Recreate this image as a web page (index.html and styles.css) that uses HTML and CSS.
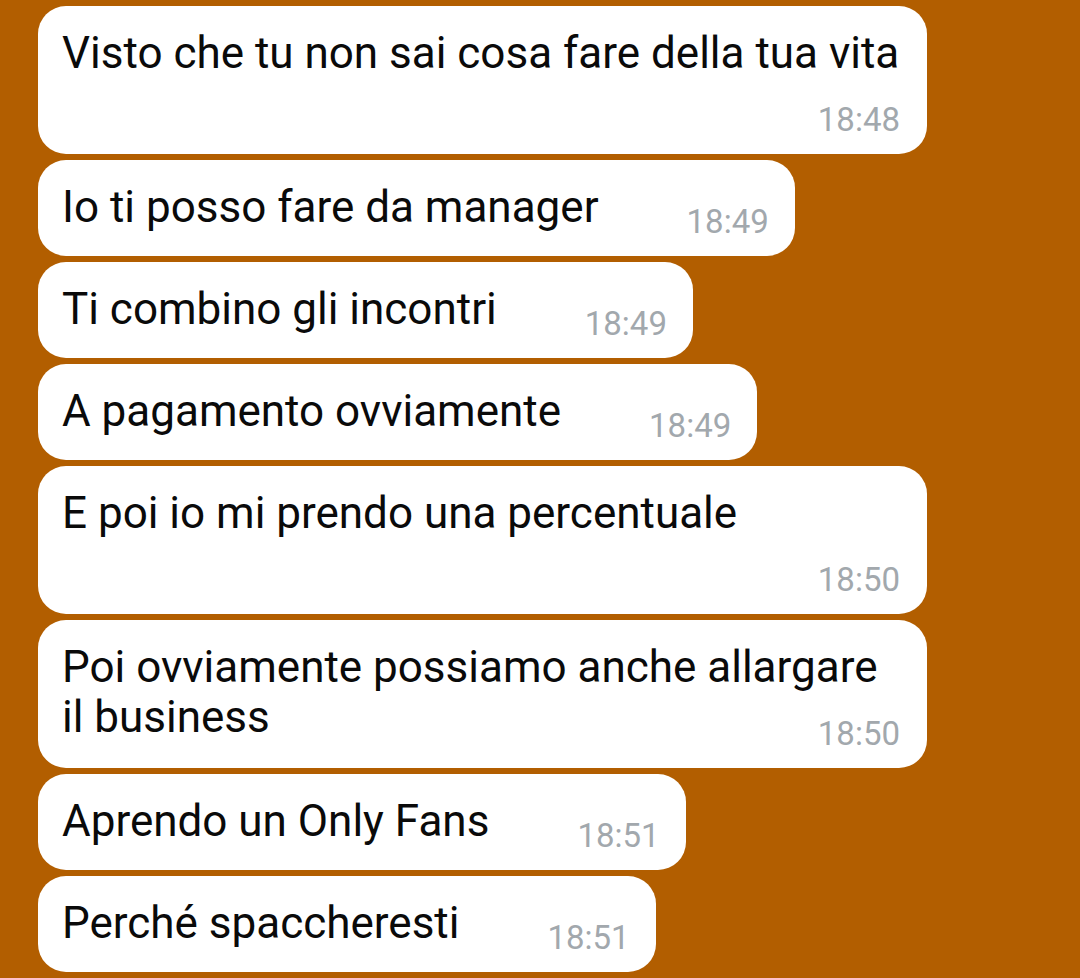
FILE: index.html
```html
<!DOCTYPE html>
<html>
<head>
    <title>Chat</title>
    <link rel="stylesheet" href="styles.css">
</head>
<body>
    <div class="chat">
        <div class="bubble wide">
            <div class="text">Visto che tu non sai cosa fare della tua vita</div>
            <div class="time below">18:48</div>
        </div>
        <div class="bubble row">
            <div class="text">Io ti posso fare da manager</div>
            <div class="time">18:49</div>
        </div>
        <div class="bubble row">
            <div class="text">Ti combino gli incontri</div>
            <div class="time">18:49</div>
        </div>
        <div class="bubble row">
            <div class="text">A pagamento ovviamente</div>
            <div class="time">18:49</div>
        </div>
        <div class="bubble wide">
            <div class="text">E poi io mi prendo una percentuale</div>
            <div class="time below">18:50</div>
        </div>
        <div class="bubble wide">
            <div class="text">Poi ovviamente possiamo anche allargare<br>il business</div>
            <div class="time inline">18:50</div>
        </div>
        <div class="bubble row">
            <div class="text">Aprendo un Only Fans</div>
            <div class="time">18:51</div>
        </div>
        <div class="bubble row">
            <div class="text">Perché spaccheresti</div>
            <div class="time">18:51</div>
        </div>
    </div>
</body>
</html>
```

FILE: styles.css
```css
html, body {
    margin: 0;
    height: 100%;
}

body {
    background: #b25e00;
    font-family: Roboto, "Liberation Sans", sans-serif;
    overflow: hidden;
}

.chat {
    display: flex;
    flex-direction: column;
    align-items: flex-start;
    gap: 6px;
    padding: 6px 0 0 38px;
}

.bubble {
    background: #fff;
    border-radius: 28px;
    padding: 22px 26px 14px 24px;
    box-sizing: border-box;
}

.bubble.wide {
    width: 889px;
    padding-right: 20px;
}

.bubble.row {
    display: flex;
    align-items: flex-start;
    gap: 88px;
}

.text {
    font-size: 44px;
    line-height: 50px;
    color: #0a0a0a;
}

.time {
    font-size: 33px;
    line-height: 40px;
    color: #a2a8ad;
    white-space: nowrap;
}

.bubble.row .time {
    margin-top: 20px;
}

.time.below {
    text-align: right;
    margin-top: 22px;
    margin-right: 7px;
}

.time.inline {
    text-align: right;
    margin-top: -28px;
    margin-right: 7px;
}
```
